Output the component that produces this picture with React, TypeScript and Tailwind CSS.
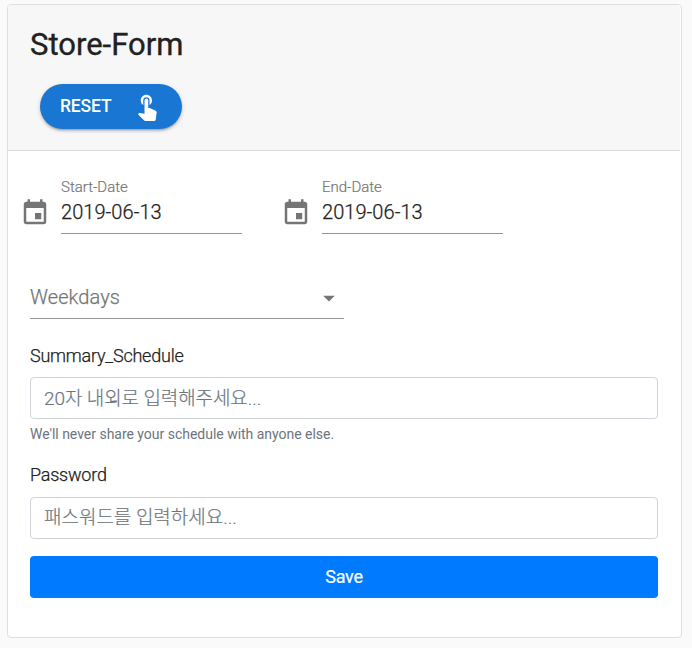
import React from "react";

function CalendarIcon() {
  return (
    <svg className="-ml-[1.5px] h-[30px] w-[30px] shrink-0" viewBox="0 0 24 24" fill="#757575">
      <path d="M17 12h-5v5h5v-5zM16 1v2H8V1H6v2H5c-1.11 0-1.99.9-1.99 2L3 19c0 1.1.89 2 2 2h14c1.1 0 2-.9 2-2V5c0-1.1-.9-2-2-2h-1V1h-2zm3 18H5V8h14v11z" />
    </svg>
  );
}

function DateField({ label, value }: { label: string; value: string }) {
  return (
    <div className="flex w-[261px] items-start">
      <div className="w-10 pt-[18px]"><CalendarIcon /></div>
      <div className="h-[54px] w-[181px] border-b border-[#949494]">
        <div className="text-[15px] font-light leading-[14px] text-[#757575] [-webkit-text-stroke:0.2px]">{label}</div>
        <div className="mt-[6px] text-[20px] font-light leading-[24px] tracking-[0.05px] text-[#212121] [-webkit-text-stroke:0.25px]">{value}</div>
      </div>
    </div>
  );
}

export default function App() {
  return (
    <div className="h-[648px] w-full bg-[#fafafa] pl-[7px] pt-1 font-[Roboto,'Noto_Sans_CJK_KR',sans-serif] text-[#212529]">
      <div className="h-[634px] w-[675px] overflow-hidden rounded-[4px] border border-[#dfdfdf] bg-white">
        <header className="mr-px h-[146px] border-b border-[#d8d8d8] bg-[#f7f7f7] px-[22px] pt-[21px]">
          <h1 className="text-[31px] font-normal leading-[38px] text-[#212121] [-webkit-text-stroke:0.35px]">Store-Form</h1>
          <button className="ml-[10px] mt-5 flex h-[45px] w-[142px] items-center rounded-full bg-[#1976d2] pl-5 text-[17.5px] font-medium text-white shadow-[0_3px_2px_-2px_rgba(0,0,0,0.2),0_2px_3px_rgba(0,0,0,0.14),0_1px_5px_rgba(0,0,0,0.12)]">
            <span className="-mt-px w-[72px] text-left tracking-[-0.15px]">RESET</span>
            <svg className="-mt-px h-[30px] w-[30px]" viewBox="0 0 24 24" fill="currentColor">
              <path d="M9 11.24V7.5a2.5 2.5 0 0 1 5 0v3.74c1.21-.81 2-2.18 2-3.74C16 5.01 13.99 3 11.5 3S7 5.01 7 7.5c0 1.56.79 2.93 2 3.74zm9.84 4.63-4.54-2.26c-.17-.07-.35-.11-.54-.11H13v-6a1.5 1.5 0 0 0-3 0v10.74l-3.43-.72a1.13 1.13 0 0 0-1.03.31l-.79.8 4.94 4.94c.27.27.65.44 1.06.44h6.79c.75 0 1.33-.55 1.44-1.28l.75-5.27c.01-.07.02-.14.02-.2 0-.62-.38-1.16-.91-1.39z" />
            </svg>
          </button>
        </header>
        <main className="px-[22px]">
          <div className="-ml-[9px] flex pt-[29px]">
            <DateField label="Start-Date" value="2019-06-13" />
            <DateField label="End-Date" value="2019-06-13" />
          </div>
          <div className="mt-[49px] flex h-[36px] w-[314px] justify-between border-b border-[#949494] text-[20px] font-light leading-[29px] tracking-[0.1px] text-[#757575]">
            <span className="[-webkit-text-stroke:0.25px]">Weekdays</span>
            <svg className="-mr-px mt-[1px] h-7 w-7 -translate-x-[2px]" viewBox="0 0 24 24" fill="#757575"><path d="m7 10 5 5 5-5z" /></svg>
          </div>
          <label className="mt-[25px] block text-[18px] font-light leading-6 tracking-[-0.22px] text-[#212121] [-webkit-text-stroke:0.25px]">Summary_Schedule</label>
          <input className="mt-[9px] block h-[42px] w-[628px] rounded-[4px] border border-[#ced4da] px-[13px] text-[19px] font-light tracking-[-0.1px] placeholder:text-[#6c757d] placeholder:opacity-100 placeholder:[-webkit-text-stroke:0.2px]" placeholder="20자 내외로 입력해주세요..." />
          <p className="mt-[5px] text-[14px] leading-5 tracking-[-0.02px] text-[#6c757d]">We'll never share your schedule with anyone else.</p>
          <label className="mt-[19px] block text-[18px] font-light leading-6 tracking-[-0.22px] text-[#212121] [-webkit-text-stroke:0.25px]">Password</label>
          <input type="password" className="mt-[10px] block h-[42px] w-[628px] rounded-[4px] border border-[#ced4da] px-[13px] pb-[2px] text-[19px] font-light tracking-[-0.02px] placeholder:text-[#6c757d] placeholder:opacity-100 placeholder:[-webkit-text-stroke:0.2px]" placeholder="패스워드를 입력하세요..." />
          <button className="mt-[17px] block h-[42px] w-[628px] rounded-[4px] bg-[#007bff] pb-[2px] text-[18px] tracking-[-0.2px] text-white [-webkit-text-stroke:0.2px]">Save</button>
        </main>
      </div>
    </div>
  );
}
